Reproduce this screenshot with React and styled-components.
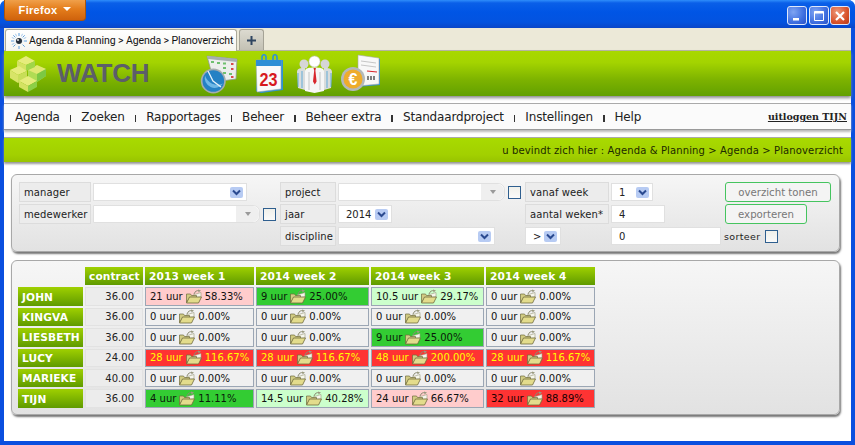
import React from "react";
import styled, { createGlobalStyle, css } from "styled-components";

const GlobalStyle = createGlobalStyle`
  html, body { margin: 0; padding: 0; background: #fff; }
  body { width: 855px; height: 445px; overflow: hidden; font-family: "DejaVu Sans", sans-serif; }
  * { box-sizing: border-box; }
`;

const Win = styled.div`
  width: 855px;
  height: 445px;
  display: flex;
  flex-direction: column;
  background: #0a4fdf;
  border-radius: 7px 7px 0 0;
`;
const TitleBar = styled.div`
  height: 28px;
  flex: none;
  display: flex;
  justify-content: space-between;
  align-items: flex-start;
  padding: 0 0 0 4px;
  border-radius: 7px 7px 0 0;
  background: linear-gradient(#2f8dfb 0, #0a5fe8 3px, #0055e5 12px, #0353e0 22px, #0a46c8 28px);
`;
const FirefoxButton = styled.div`
  width: 82px;
  height: 21px;
  display: flex;
  align-items: center;
  justify-content: center;
  gap: 6px;
  color: #fff;
  font: bold 11px "Liberation Sans", sans-serif;
  letter-spacing: 0.3px;
  border: 1px solid #a8560f;
  border-top: 0;
  border-radius: 0 0 4px 4px;
  background: linear-gradient(#f0a04a, #e47d1c 45%, #cf620c);
`;
const Caret = styled.i`
  width: 0;
  height: 0;
  margin-top: -2px;
  border: 4px solid transparent;
  border-top: 4px solid #fff;
  border-bottom: 0;
`;
const WinButtons = styled.div`
  display: flex;
  gap: 1.5px;
  padding: 6px 5px 0 0;
`;
const WinButton = styled.div`
  width: 20px;
  height: 19px;
  display: flex;
  align-items: center;
  justify-content: center;
  border: 1px solid #dfe8fb;
  border-radius: 3px;
  background: ${(p) =>
    p.$close
      ? "radial-gradient(circle at 35% 30%, #ee9a7c, #d8532c 60%, #b93a16)"
      : "radial-gradient(circle at 30% 30%, #7fa4f2, #3f6fe0 60%, #2a52c8)"};
`;
const Inner = styled.div`
  flex: 1;
  margin: 0 4px 4px;
  background: #fff;
  display: flex;
  flex-direction: column;
  min-height: 0;
`;
const TabStrip = styled.div`
  height: 23px;
  flex: none;
  display: flex;
  align-items: flex-end;
  gap: 2px;
  padding-left: 1px;
  background: #ece9d8;
  border-bottom: 1px solid #b8b6a4;
`;
const Tab = styled.div`
  width: 232px;
  height: 22px;
  margin-bottom: -1px;
  display: flex;
  align-items: center;
  gap: 2px;
  padding-left: 5px;
  background: linear-gradient(#fff, #f6f5ef);
  border: 1px solid #aaa99a;
  border-bottom: 0;
  border-radius: 3px 3px 0 0;
  font: 10.5px Roboto, sans-serif;
  letter-spacing: -0.1px;
  color: #111;
  white-space: nowrap;
`;
const NewTab = styled.div`
  width: 25px;
  height: 21px;
  display: flex;
  align-items: center;
  justify-content: center;
  background: linear-gradient(#dcdad0, #c3c1b4);
  border: 1px solid #a5a396;
  border-bottom: 0;
  border-radius: 3px 3px 0 0;
`;
const Header = styled.header`
  height: 45px;
  flex: none;
  display: flex;
  align-items: center;
  background: linear-gradient(#a8d800 0, #a4d400 25%, #7cb200 65%, #62a000 100%);
  box-shadow: 0 2px 3px #8a8a8a;
  padding-left: 5px;
`;
const Logo = styled.svg`
  width: 38px;
  height: 36px;
  flex: none;
`;
const Brand = styled.div`
  width: 153px;
  padding-left: 10px;
  font: bold 26px "Liberation Sans", sans-serif;
  color: #5c5e6a;
  letter-spacing: -0.2px;
`;
const Icons = styled.div`
  display: flex;
  align-items: center;
`;
const NavBar = styled.nav`
  height: 27px;
  flex: none;
  margin-top: 7px;
  display: flex;
  align-items: center;
  justify-content: space-between;
  padding: 0 4px 0 11px;
  background: #fbfbfb;
  border-top: 1px solid #aaa;
  border-bottom: 1px solid #9a9a9a;
  box-shadow: 0 2px 2px #bbb;
`;
const NavList = styled.div`
  display: flex;
  align-items: center;
`;
const NavItem = styled.a`
  font-size: 12px;
  letter-spacing: -0.17px;
  color: #222;
`;
const NavSep = styled.span`
  width: 1.5px;
  height: 7px;
  margin: 3px 10px 0;
  background: #333;
`;
const Logout = styled.a`
  font: bold 9.5px "DejaVu Serif", serif;
  color: #222;
  text-decoration: underline;
`;
const Crumbs = styled.div`
  height: 25px;
  flex: none;
  margin-top: 7px;
  display: flex;
  align-items: center;
  justify-content: flex-end;
  padding-right: 8px;
  font-size: 10px;
  letter-spacing: 0.12px;
  color: #1c2a00;
  border-top: 1px solid #aaa;
  background: linear-gradient(#a8da00, #a2d000 70%, #98c400);
  box-shadow: 0 2px 2px #999;
`;
const Panel = styled.section`
  margin: 0 11px 0 7px;
  border: 1px solid #a8a8a8;
  border-radius: 6px;
  background: linear-gradient(#f6f6f6, #e2e2e2);
  box-shadow: 1px 2px 2px #777;
`;
const FilterPanel = styled(Panel)`
  height: 78px;
  margin-top: 12px;
  padding: 7px 0 0 7px;
  display: grid;
  grid-template-columns: 72px 185px 56px 185px 84px 112px 106px;
  grid-auto-rows: 20px;
  gap: 2px;
`;
const Label = styled.div`
  display: flex;
  align-items: center;
  padding-left: 4px;
  font-size: 10px;
  letter-spacing: 0.1px;
  color: #222;
  background: #ececec;
  border: 1px solid #dcdcdc;
  white-space: nowrap;
`;
const Cell = styled.div`
  display: flex;
  align-items: center;
  gap: 3px;
  min-width: 0;
`;
const field = css`
  height: 18px;
  width: ${(p) => p.$w}px;
  flex: none;
  background: #fff;
  border: 1px solid #e0e0e0;
  font-size: 10px;
  color: #222;
  display: flex;
  align-items: center;
  padding-left: 7px;
`;
const Select = styled.div`
  ${field}
  justify-content: space-between;
  padding-right: 3px;
`;
const Arrow = styled.span`
  width: 13px;
  height: 11px;
  flex: none;
  display: flex;
  align-items: center;
  justify-content: center;
  background: #b7cbf3;
  border-radius: 2px;
`;
const Combo = styled.div`
  ${field}
  justify-content: flex-end;
  padding: 0;
  border-radius: 0 7px 7px 0;
`;
const ComboEnd = styled.span`
  width: 23px;
  height: 100%;
  display: flex;
  align-items: center;
  justify-content: center;
  background: #efefef;
  border-radius: 0 7px 7px 0;
  &::after {
    content: "";
    border: 3px solid transparent;
    border-top: 4px solid #9a9a9a;
    border-bottom: 0;
  }
`;
const TextInput = styled.div`
  ${field}
`;
const Check = styled.span`
  width: 13px;
  height: 13px;
  flex: none;
  border: 1px solid #2f5f8f;
  background: linear-gradient(#f0f0ea, #fafafa);
`;
const Sort = styled.span`
  font-size: 9.5px;
  letter-spacing: 0.35px;
  color: #222;
  margin: 0 2px 0 -1px;
`;
const Button = styled.button`
  width: ${(p) => p.$w}px;
  height: 20px;
  padding: 0;
  border: 1px solid #45c45f;
  border-radius: 3px;
  background: #f4f4f4;
  font: 10.2px "DejaVu Sans", sans-serif;
  color: #777;
`;
const ResultPanel = styled(Panel)`
  height: 155px;
  margin-top: 8px;
  padding: 6px 0 0 6px;
  display: grid;
  grid-template-columns: 65px 58px 109px 113px 113px 109px;
  grid-auto-rows: 18.4px;
  gap: 2px;
`;
const green = css`
  background: linear-gradient(#9fd000, #5f9a00);
  color: #fff;
  font-weight: bold;
  font-size: 10.6px;
  letter-spacing: 0.1px;
  display: flex;
  align-items: center;
  padding-left: 4px;
  white-space: nowrap;
`;
const Head = styled.div`
  ${green}
`;
const Name = styled.div`
  ${green}
`;
const Blank = styled.div``;
const Contract = styled.div`
  display: flex;
  align-items: center;
  justify-content: flex-end;
  padding-right: 8px;
  font-size: 10px;
  color: #222;
  background: #ececec;
  border: 1px solid #e2e2e2;
`;
const tones = {
  none: ["#f0f0f0", "#111"],
  pink: ["#ffcccc", "#111"],
  mint: ["#ccffcc", "#111"],
  green: ["#33cc33", "#0a1a0a"],
  hot: ["#ff3333", "#ffff00"],
  dark: ["#ff3333", "#200000"],
};
const Week = styled.div`
  display: flex;
  align-items: center;
  gap: 3px;
  padding-left: 4px;
  font-size: 10px;
  white-space: nowrap;
  overflow: hidden;
  border: 1px solid #9ba6b4;
  background: ${(p) => tones[p.$tone][0]};
  color: ${(p) => tones[p.$tone][1]};
`;

const Chevron = () => (
  <svg width="9" height="7" viewBox="0 0 9 7">
    <path d="M1 1.5 4.5 5 8 1.5" fill="none" stroke="#2a4a90" strokeWidth="2" />
  </svg>
);

const Folder = () => (
  <svg width="16" height="15" viewBox="0 0 16 15" style={{ flex: "none" }}>
    <path d="M8 5 C9 2 11 1.5 13 1.5" fill="none" stroke="#8a8a70" strokeWidth="1" />
    <path d="M12 0.5 15 1.5 12.5 3.5Z" fill="#9a9a80" />
    <path d="M7 6 15 3.5 15 8 8 9Z" fill="#f6f6ec" stroke="#99997a" strokeWidth="0.6" />
    <path d="M0.5 13.5V5h4l1 1.5h5V9H4Z" fill="#d2cc84" stroke="#6e6a3c" strokeWidth="0.7" />
    <path d="M0.5 14 3.5 8H15.5L12.5 14Z" fill="#e3dc8c" stroke="#6e6a3c" strokeWidth="0.8" />
  </svg>
);

const Favicon = () => (
  <svg width="16" height="16" viewBox="0 0 16 16" style={{ flex: "none" }}>
    <g stroke="#5c9fe0" strokeWidth="1">
      <path d="M8 0v3M8 13v3M0 8h3M13 8h3M2.3 2.3l2.1 2.1M11.6 11.6l2.1 2.1M2.3 13.7l2.1-2.1M11.6 4.4l2.1-2.1" />
      <path d="M4.5 0.8 5.6 3.4M11.5 0.8 10.4 3.4M0.8 4.5 3.4 5.6M0.8 11.5 3.4 10.4M15.2 4.5 12.6 5.6" stroke="#a6c8ec" />
    </g>
    <path d="M2.5 8C4.5 5 11.5 5 13.5 8 11.5 11 4.5 11 2.5 8Z" fill="#e8eef4" />
    <circle cx="8" cy="8" r="3" fill="#25303c" />
    <circle cx="7" cy="7" r="0.9" fill="#fff" />
  </svg>
);

const PlusIcon = () => (
  <svg width="11" height="11" viewBox="0 0 11 11">
    <path d="M5.5 1v9M1 5.5h9" stroke="#2f4560" strokeWidth="2" />
  </svg>
);

const CloseGlyph = () => (
  <svg width="12" height="12" viewBox="0 0 12 12">
    <path d="M2 2 10 10M10 2 2 10" stroke="#fff" strokeWidth="2.2" />
  </svg>
);

const LogoMark = () => (
  <Logo viewBox="0 0 38 36">
    <path d="M19 14 28 10 37 13V20L28 26 19 22Z" fill="#b0dc54" />
    <path d="M19 14 28 9 37 13 28 18Z" fill="#e0e872" />
    <path d="M28 18 37 13V20L28 26Z" fill="#7cc844" />
    <path d="M8 5 17 0 26 5 17 9Z" fill="#e6ec7c" />
    <path d="M8 5 17 9V15L8 11Z" fill="#d4e262" />
    <path d="M17 9 26 5V11L17 15Z" fill="#a0d64a" />
    <path d="M1 14 10 10 18 15 9 19Z" fill="#e6ec7c" />
    <path d="M1 14 9 19V27L1 22Z" fill="#d8e468" />
    <path d="M9 19 18 15V22L9 27Z" fill="#c8de58" />
    <path d="M10 25 19 20 28 25 19 30Z" fill="#e6ec7c" />
    <path d="M10 25 19 30V36L10 31Z" fill="#d4e262" />
    <path d="M19 30 28 25V31L19 36Z" fill="#8ccf48" />
  </Logo>
);

const ClockIcon = () => (
  <svg width="40" height="40" viewBox="0 0 40 40">
    <path d="M7 2 37 5 36 25 14 28Z" fill="#eceeec" stroke="#8d9a8c" strokeWidth="0.8" />
    <path d="M7 2 37 5V8L8 5Z" fill="#a6aeb0" />
    <g fill="#6fc06f">
      <rect x="11" y="7" width="3" height="2" />
      <rect x="17" y="8" width="3" height="2" />
      <rect x="23" y="8.5" width="3" height="2" />
      <rect x="23" y="13" width="3" height="2" />
      <rect x="23" y="18" width="3" height="2" />
      <rect x="29" y="19" width="3" height="2" />
    </g>
    <g fill="#d84a4a">
      <rect x="31" y="9" width="2.5" height="2" />
      <rect x="31" y="14" width="2.5" height="2" />
      <rect x="31" y="22" width="2.5" height="2" />
    </g>
    <circle cx="13.3" cy="27" r="12.5" fill="#a4acae" />
    <circle cx="13.3" cy="27" r="10.8" fill="#2581c4" />
    <path d="M5 21.5A10 10 0 0 0 23 29.5 13 13 0 0 1 5 21.5Z" fill="#6fb8e6" />
    <path d="M8 17 13 27 21 33" fill="none" stroke="#e6f2fa" strokeWidth="1.3" />
  </svg>
);

const CalendarIcon = () => (
  <svg width="30" height="40" viewBox="0 0 30 40" style={{ marginLeft: 15 }}>
    <path d="M4 6H28V36L6 39 1 37Z" fill="#2f92d6" />
    <path d="M1 6H26V35L2 38Z" fill="#fafafa" stroke="#9aa" strokeWidth="0.6" />
    <path d="M1 6H26V12H1Z" fill="#2f8fd6" />
    <path d="M7 9V3C7 0 11 0 11 3V8M18 9V3C18 0 22 0 22 3V8" fill="none" stroke="#2f8fd6" strokeWidth="1.6" />
    <text x="13.5" y="31.5" textAnchor="middle" fill="#d71920" fontFamily="Liberation Sans" fontWeight="bold" fontSize="18" textLength="18" lengthAdjust="spacingAndGlyphs">23</text>
  </svg>
);

const PeopleIcon = () => (
  <svg width="37" height="38" viewBox="0 0 37 38" style={{ marginLeft: 11 }}>
    <g fill="#d6d6d6">
      <circle cx="8" cy="9" r="4.5" />
      <circle cx="29" cy="9" r="4.5" />
      <path d="M1 17C1 13 5 13 9 13V35L2 33ZM36 17C36 13 32 13 28 13V35L35 33Z" fill="#d9dcdc" />
    </g>
    <path d="M2 18v14M6 16v17M31 16v17M35 18v14" stroke="#2f9ad8" strokeWidth="0.7" />
    <circle cx="18.5" cy="6.5" r="5.6" fill="#fff" stroke="#bbb" strokeWidth="0.6" />
    <path d="M9 16C9 13 13 12.5 18.5 12.5S28 13 28 16V36L18.5 38 9 36Z" fill="#f6f6f6" />
    <path d="M13 17V35M24 17V35" stroke="#c2c6c6" strokeWidth="1" />
    <path d="M17.5 13h2.4l-.5 2.5 1.2 11-1.8 3-1.8-3 1.2-11Z" fill="#d8262c" />
  </svg>
);

const EuroIcon = () => (
  <svg width="40" height="40" viewBox="0 0 40 40" style={{ marginLeft: 8 }}>
    <path d="M18 2 39 5V31L16 33Z" fill="#2f92d6" />
    <path d="M17 1 38 4V30L17 32Z" fill="#f8f8f8" stroke="#a8a8a8" strokeWidth="0.6" />
    <path d="M20 7 35 9M20 11 35 13" stroke="#c6c6c6" strokeWidth="1" />
    <path d="M26 17 36 18" stroke="#d8262c" strokeWidth="1.2" />
    <path d="M26 23h9M26 25h9" stroke="#555" strokeWidth="1.4" strokeDasharray="2 1" />
    <circle cx="12" cy="25" r="12" fill="#b4b8ba" />
    <circle cx="12" cy="25" r="9.5" fill="#eeac2c" />
    <text x="12" y="30.5" textAnchor="middle" fill="#fff" fontFamily="Liberation Sans" fontWeight="bold" fontSize="16">€</text>
  </svg>
);

const navItems = ["Agenda", "Zoeken", "Rapportages", "Beheer", "Beheer extra", "Standaardproject", "Instellingen", "Help"];

const rows = [
  { name: "JOHN", contract: "36.00", weeks: [["21 uur", "58.33%", "pink"], ["9 uur", "25.00%", "green"], ["10.5 uur", "29.17%", "mint"], ["0 uur", "0.00%", "none"]] },
  { name: "KINGVA", contract: "36.00", weeks: [["0 uur", "0.00%", "none"], ["0 uur", "0.00%", "none"], ["0 uur", "0.00%", "none"], ["0 uur", "0.00%", "none"]] },
  { name: "LIESBETH", contract: "36.00", weeks: [["0 uur", "0.00%", "none"], ["0 uur", "0.00%", "none"], ["9 uur", "25.00%", "green"], ["0 uur", "0.00%", "none"]] },
  { name: "LUCY", contract: "24.00", weeks: [["28 uur", "116.67%", "hot"], ["28 uur", "116.67%", "hot"], ["48 uur", "200.00%", "hot"], ["28 uur", "116.67%", "hot"]] },
  { name: "MARIEKE", contract: "40.00", weeks: [["0 uur", "0.00%", "none"], ["0 uur", "0.00%", "none"], ["0 uur", "0.00%", "none"], ["0 uur", "0.00%", "none"]] },
  { name: "TIJN", contract: "36.00", weeks: [["4 uur", "11.11%", "green"], ["14.5 uur", "40.28%", "mint"], ["24 uur", "66.67%", "pink"], ["32 uur", "88.89%", "dark"]] },
];

const weekHeads = ["2013 week 1", "2014 week 2", "2014 week 3", "2014 week 4"];

export default function App() {
  return (
    <>
      <GlobalStyle />
      <Win>
        <TitleBar>
          <FirefoxButton>
            Firefox <Caret />
          </FirefoxButton>
          <WinButtons>
            <WinButton>
              <svg width="12" height="12" viewBox="0 0 12 12"><rect x="2" y="8" width="6" height="2.5" fill="#fff" /></svg>
            </WinButton>
            <WinButton>
              <svg width="12" height="12" viewBox="0 0 12 12"><path d="M1.5 1.5h9v9h-9z" fill="none" stroke="#fff" strokeWidth="1" /><path d="M1.5 2.5h9" stroke="#fff" strokeWidth="2" /></svg>
            </WinButton>
            <WinButton $close>
              <CloseGlyph />
            </WinButton>
          </WinButtons>
        </TitleBar>
        <Inner>
          <TabStrip>
            <Tab>
              <Favicon />
              Agenda &amp; Planning &gt; Agenda &gt; Planoverzicht
            </Tab>
            <NewTab>
              <PlusIcon />
            </NewTab>
          </TabStrip>
          <Header>
            <LogoMark />
            <Brand>WATCH</Brand>
            <Icons>
              <ClockIcon />
              <CalendarIcon />
              <PeopleIcon />
              <EuroIcon />
            </Icons>
          </Header>
          <NavBar>
            <NavList>
              {navItems.map((item, i) => (
                <React.Fragment key={item}>
                  {i > 0 && <NavSep />}
                  <NavItem>{item}</NavItem>
                </React.Fragment>
              ))}
            </NavList>
            <Logout>uitloggen TIJN</Logout>
          </NavBar>
          <Crumbs>u bevindt zich hier : Agenda &amp; Planning &gt; Agenda &gt; Planoverzicht</Crumbs>

          <FilterPanel>
            <Label>manager</Label>
            <Cell>
              <Select $w={154}><span /><Arrow><Chevron /></Arrow></Select>
            </Cell>
            <Label>project</Label>
            <Cell>
              <Combo $w={167}><ComboEnd /></Combo>
              <Check />
            </Cell>
            <Label>vanaf week</Label>
            <Cell>
              <Select $w={42}>1<Arrow><Chevron /></Arrow></Select>
            </Cell>
            <Cell>
              <Button $w={106}>overzicht tonen</Button>
            </Cell>

            <Label>medewerker</Label>
            <Cell>
              <Combo $w={167}><ComboEnd /></Combo>
              <Check />
            </Cell>
            <Label>jaar</Label>
            <Cell>
              <Select $w={54}>2014<Arrow><Chevron /></Arrow></Select>
            </Cell>
            <Label>aantal weken*</Label>
            <Cell>
              <TextInput $w={54}>4</TextInput>
            </Cell>
            <Cell>
              <Button $w={82}>exporteren</Button>
            </Cell>

            <Blank />
            <Blank />
            <Label>discipline</Label>
            <Cell>
              <Select $w={157}><span /><Arrow><Chevron /></Arrow></Select>
            </Cell>
            <Cell>
              <Select $w={36}>&gt;<Arrow><Chevron /></Arrow></Select>
            </Cell>
            <Cell>
              <TextInput $w={110}>0</TextInput>
            </Cell>
            <Cell>
              <Sort>sorteer</Sort>
              <Check />
            </Cell>
          </FilterPanel>

          <ResultPanel>
            <Blank />
            <Head>contract</Head>
            {weekHeads.map((head) => (
              <Head key={head}>{head}</Head>
            ))}
            {rows.map((row) => (
              <React.Fragment key={row.name}>
                <Name>{row.name}</Name>
                <Contract>{row.contract}</Contract>
                {row.weeks.map(([hours, pct, tone], i) => (
                  <Week key={i} $tone={tone}>
                    {hours} <Folder /> {pct}
                  </Week>
                ))}
              </React.Fragment>
            ))}
          </ResultPanel>
        </Inner>
      </Win>
    </>
  );
}
